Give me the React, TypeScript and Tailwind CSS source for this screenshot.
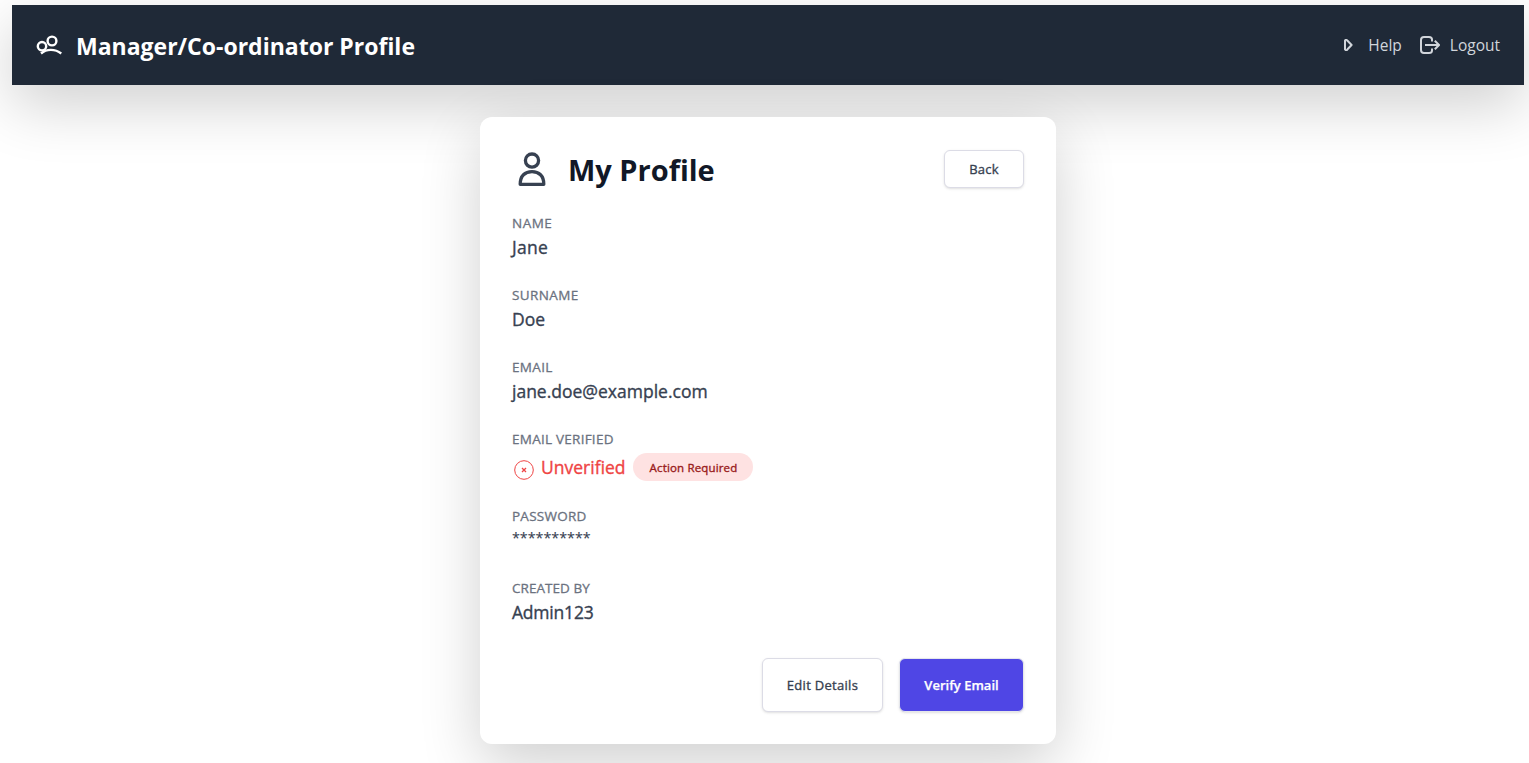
import type { ReactNode } from 'react';

function Field({ label, labelClass = 'tracking-[0.25px]', valueClass = 'h-7', children }: { label: string; labelClass?: string; valueClass?: string; children: ReactNode }) {
  return (
    <div>
      <dt className={`h-5 whitespace-nowrap text-[13.5px] font-medium leading-5 text-[#6b7280] [-webkit-text-stroke:0.3px] ${labelClass}`}>{label}</dt>
      <dd className={`text-[17.5px] font-medium leading-7 text-[#374151] [-webkit-text-stroke:0.35px] ${valueClass}`}>{children}</dd>
    </div>
  );
}

export default function App() {
  return (
    <div className="h-[763px] overflow-hidden bg-white pl-3 pr-[5px] pt-[5px] font-['Open_Sans','Noto_Sans',sans-serif]">
      <header className="flex h-20 items-center justify-between bg-[#1f2937] px-6 shadow-[0_20px_60px_rgba(0,0,0,0.19)]">
        <div className="flex items-center">
          <svg className="h-[26px] w-[26px]" viewBox="0 0 26 26" fill="none" stroke="white" strokeWidth="2.4">
            <circle cx="6" cy="14.2" r="4.2" />
            <circle cx="16" cy="9" r="4.4" />
            <path d="M5 21.5c5.5-4.8 14-4.9 20.3 0" />
          </svg>
          <h1 className="ml-[14px] mt-px whitespace-nowrap text-[23px] font-bold leading-8 text-white">Manager/Co-ordinator Profile</h1>
        </div>
        <nav className="flex items-center text-[15.5px] text-[#d1d5db]">
          <svg className="mr-[15px] h-3 w-[10px]" viewBox="0 0 10 12" fill="none" stroke="currentColor" strokeWidth="2" strokeLinejoin="round">
            <path d="M2 1.5Q3.2 0 4.5 1.8L8.6 6 4.5 10.3Q3.2 12 2 10.5Z" />
          </svg>
          <a className="mt-px">Help</a>
          <svg className="ml-[18px] mr-[10px] h-5 w-5" viewBox="0 0 20 20" fill="none" stroke="currentColor" strokeWidth="2">
            <path d="M12 6.5V4.5Q12 2 9 2H4Q1 2 1 5V15Q1 18 4 18H9Q12 18 12 15.5V13.5M5 10H19M14.8 5.7l4.3 4.3-4.3 4.3" />
          </svg>
          <a className="mt-px">Logout</a>
        </nav>
      </header>
      <main className="mx-auto mt-8 h-[627px] w-[576px] rounded-xl bg-white p-8 shadow-[0_20px_60px_rgba(0,0,0,0.19)]">
        <div className="flex h-10 items-center justify-between">
          <div className="flex items-center">
            <svg className="h-10 w-10 text-[#374151]" viewBox="0 0 40 40" fill="none" stroke="currentColor" strokeWidth="3.3" strokeLinejoin="round">
              <circle cx="20" cy="11.6" r="6.6" />
              <path d="M8.2 35.3C8.2 26.6 13 22.7 20 22.7S31.8 26.6 31.8 35.3Z" />
            </svg>
            <h2 className="ml-4 mt-0.5 text-[29px] font-bold leading-9 text-[#111827]">My Profile</h2>
          </div>
          <button className="h-[38px] w-20 rounded-md border border-[#dcdce6] bg-white pt-0.5 text-[13px] font-medium tracking-[0.2px] text-[#374151] shadow-sm [-webkit-text-stroke:0.35px]">Back</button>
        </div>
        <dl className="mt-6 flex flex-col gap-6">
          <Field label="NAME" labelClass="tracking-[0.5px]">
            <span className="tracking-[0.3px]">Jane</span>
          </Field>
          <Field label="SURNAME" labelClass="tracking-[0.4px]">Doe</Field>
          <Field label="EMAIL" labelClass="tracking-[0.35px]">jane.doe@example.com</Field>
          <Field label="EMAIL VERIFIED" valueClass="h-[33px]">
            <span className="flex h-[33px] items-center text-[#ef4444]">
              <svg className="mt-2 h-6 w-6" viewBox="0 0 24 24" fill="none" stroke="currentColor">
                <circle cx="12" cy="12" r="9.3" />
                <path d="m10 10 4 4m0-4-4 4" strokeWidth="1.3" />
              </svg>
              <span className="ml-[5px] mt-0.5">Unverified</span>
              <span className="ml-2 mt-[3px] flex h-7 w-[120px] items-center justify-center rounded-full bg-[#fee2e2] pt-px text-[11.5px] tracking-[0.15px] text-[#991b1b]">Action Required</span>
            </span>
          </Field>
          <Field label="PASSWORD">
            <span className="block h-7 text-[14.3px] leading-6 [-webkit-text-stroke:0.1px]">**********</span>
          </Field>
          <Field label="CREATED BY" labelClass="tracking-[0.05px]">
            <span className="tracking-[-0.2px]">Admin123</span>
          </Field>
        </dl>
        <div className="mt-8 flex justify-end gap-4">
          <button className="h-[54px] w-[121px] rounded-md border border-[#dcdce6] bg-white pt-0.5 text-[13px] font-medium tracking-[0.3px] text-[#374151] shadow-sm [-webkit-text-stroke:0.35px]">Edit Details</button>
          <button className="h-[54px] w-[125px] rounded-md border border-gray-200 bg-[#4f46e5] pt-0.5 text-[13px] font-semibold text-white shadow-sm [-webkit-text-stroke:0.25px]">Verify Email</button>
        </div>
      </main>
    </div>
  );
}
